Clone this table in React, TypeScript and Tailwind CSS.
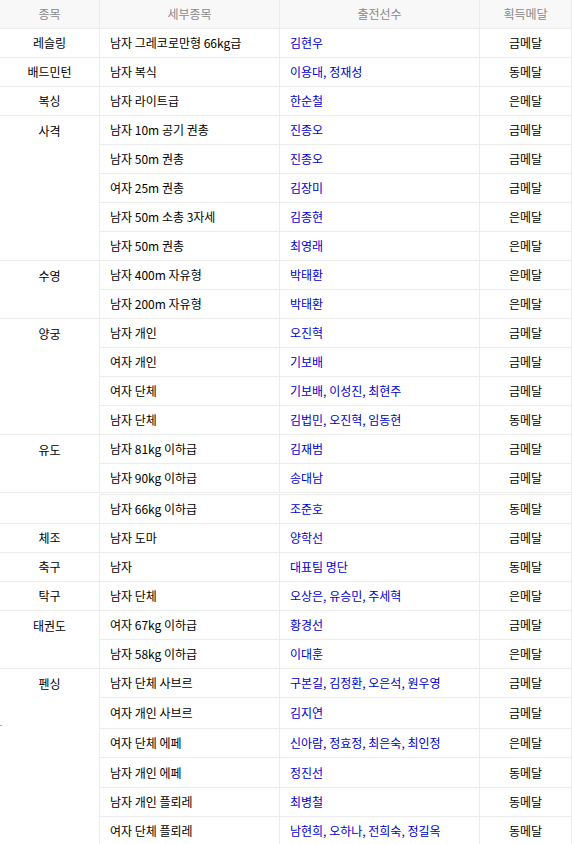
import React from "react";

type Row = { sport: string; event: string; players: string; medal: string; h?: number };

const t1: Row[][] = [
  [{ sport: "레슬링", event: "남자 그레코로만형 66kg급", players: "김현우", medal: "금메달" }],
  [{ sport: "배드민턴", event: "남자 복식", players: "이용대, 정재성", medal: "동메달" }],
  [{ sport: "복싱", event: "남자 라이트급", players: "한순철", medal: "은메달" }],
  [
    { sport: "사격", event: "남자 10m 공기 권총", players: "진종오", medal: "금메달" },
    { sport: "", event: "남자 50m 권총", players: "진종오", medal: "금메달" },
    { sport: "", event: "여자 25m 권총", players: "김장미", medal: "금메달" },
    { sport: "", event: "남자 50m 소총 3자세", players: "김종현", medal: "은메달" },
    { sport: "", event: "남자 50m 권총", players: "최영래", medal: "은메달" },
  ],
  [
    { sport: "수영", event: "남자 400m 자유형", players: "박태환", medal: "은메달" },
    { sport: "", event: "남자 200m 자유형", players: "박태환", medal: "은메달" },
  ],
  [
    { sport: "양궁", event: "남자 개인", players: "오진혁", medal: "금메달" },
    { sport: "", event: "여자 개인", players: "기보배", medal: "금메달" },
    { sport: "", event: "여자 단체", players: "기보배, 이성진, 최현주", medal: "금메달" },
    { sport: "", event: "남자 단체", players: "김법민, 오진혁, 임동현", medal: "동메달" },
  ],
  [
    { sport: "유도", event: "남자 81kg 이하급", players: "김재범", medal: "금메달" },
    { sport: "", event: "남자 90kg 이하급", players: "송대남", medal: "금메달" },
  ],
];

const t2: Row[][] = [
  [{ sport: "", event: "남자 66kg 이하급", players: "조준호", medal: "동메달" }],
  [{ sport: "체조", event: "남자 도마", players: "양학선", medal: "금메달" }],
  [{ sport: "축구", event: "남자", players: "대표팀 명단", medal: "동메달" }],
  [{ sport: "탁구", event: "남자 단체", players: "오상은, 유승민, 주세혁", medal: "은메달" }],
  [
    { sport: "태권도", event: "여자 67kg 이하급", players: "황경선", medal: "금메달" },
    { sport: "", event: "남자 58kg 이하급", players: "이대훈", medal: "은메달" },
  ],
  [
    { sport: "펜싱", event: "남자 단체 사브르", players: "구본길, 김정환, 오은석, 원우영", medal: "금메달" },
    { sport: "", event: "여자 개인 사브르", players: "김지연", medal: "금메달", h: 31 },
    { sport: "", event: "여자 단체 에페", players: "신아람, 정효정, 최은숙, 최인정", medal: "은메달" },
    { sport: "", event: "남자 개인 에페", players: "정진선", medal: "동메달", h: 30 },
    { sport: "", event: "남자 개인 플뢰레", players: "최병철", medal: "동메달" },
    { sport: "", event: "여자 단체 플뢰레", players: "남현희, 오하나, 전희숙, 정길옥", medal: "동메달" },
  ],
];

const B = "border-[#ececec]";

function Group({ rows, firstTop }: { rows: Row[]; firstTop?: boolean }) {
  return (
    <>
      {rows.map((r, i) => {
        const last = i === rows.length - 1;
        const top = firstTop && i === 0;
        const h = (r.h ?? 29) + (top ? 1 : 0);
        return (
          <div key={i} className="relative flex" style={{ height: h }}>
            {r.h === 31 && (
              <span className="absolute left-0 top-[27px] h-px w-[2px] bg-[#aaaaaa]" />
            )}
            <div
              className={`flex w-[100px] shrink-0 items-center justify-center border-r ${B} ${
                last ? "border-b" : ""
              } ${top ? "pt-px" : ""}`}
            >
              {r.sport}
            </div>
            <div className={`flex w-[180px] shrink-0 items-center border-r border-b ${B} pl-[10px] ${top ? "border-t" : ""}`}>
              {r.event}
            </div>
            <div className={`flex w-[200px] shrink-0 items-center border-r border-b ${B} pl-[10px] text-[#0000cc] ${top ? "border-t" : ""}`}>
              {r.players}
            </div>
            <div className={`flex w-[92px] shrink-0 items-center justify-center border-r border-b ${B} ${top ? "border-t" : ""}`}>
              {r.medal}
            </div>
          </div>
        );
      })}
    </>
  );
}

export default function App() {
  return (
    <div
      className="w-[573px] bg-white text-[12px] leading-none text-black"
      style={{ fontFamily: '"Noto Sans CJK KR", "Noto Sans", sans-serif' }}
    >
      <div className="w-[572px]">
        <div className={`flex h-[29px] border-b ${B} bg-[#f8f8f8] text-[#888888]`}>
          <div className={`flex w-[100px] items-center justify-center border-r ${B}`}>종목</div>
          <div className={`flex w-[180px] items-center justify-center border-r ${B}`}>세부종목</div>
          <div className={`flex w-[200px] items-center justify-center border-r ${B}`}>출전선수</div>
          <div className={`flex w-[92px] items-center justify-center border-r ${B}`}>획득메달</div>
        </div>
        {t1.map((g, i) => (
          <Group key={i} rows={g} />
        ))}
        <div className="h-px" />
        {t2.map((g, i) => (
          <Group key={i} rows={g} firstTop={i === 0} />
        ))}
      </div>
    </div>
  );
}
